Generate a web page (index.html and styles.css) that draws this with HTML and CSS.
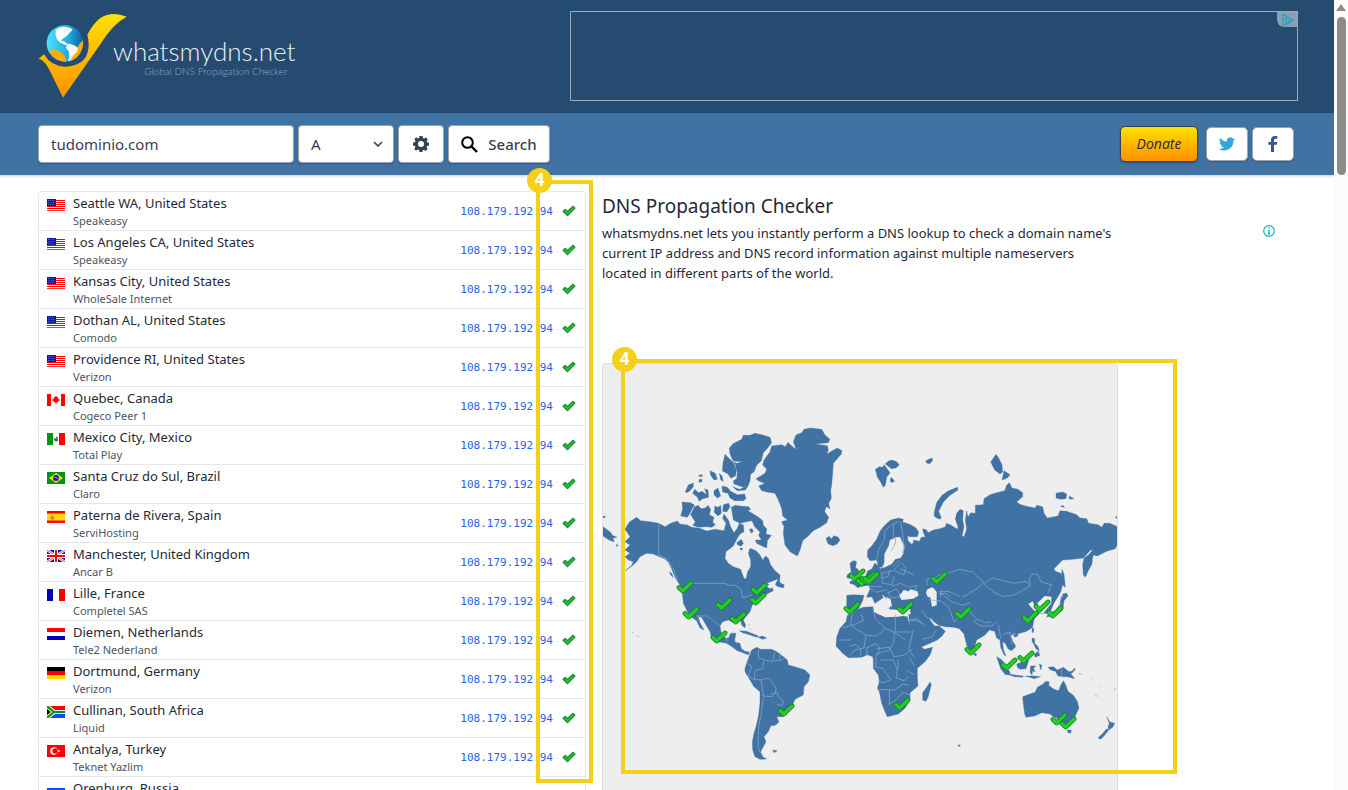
FILE: index.html
```html
<!DOCTYPE html>
<html lang="en">
<head>
<meta charset="utf-8">
<title>DNS Propagation Checker - whatsmydns.net</title>
<link rel="stylesheet" href="styles.css">
</head>
<body>
<svg class="sprite" aria-hidden="true">
  <symbol id="us" viewBox="0 0 18 12"><path fill="#fff" d="M0 0h18v12H0z"/><path stroke="#f00" d="M0 1.5h18M0 3.5h18M0 5.5h18M0 7.5h18M0 9.5h18"/><path stroke="#f33" d="M0 11.5h18"/><path fill="#0a17a7" d="M0 0h9v7H0z"/><path stroke="#8e95dd" stroke-width=".7" stroke-dasharray="1 1.3" d="M1 1.5h7M1.5 3.5h7M1 5.5h7"/></symbol>
  <symbol id="ca" viewBox="0 0 18 12"><path fill="#fff" d="M0 0h18v12H0z"/><path fill="#f00" d="M0 0h4v12H0zM14 0h4v12h-4zM9 1.5l1 1.8 1-.5-.2 2.2 1.7-.8-.3 1.4.8.5-2.5 1.9.2.8-1.4-.2V11h-.6V8.6l-1.4.2.2-.8L5 6.100l.8-.5-.3-1.400 1.700.8L7 2.800l1 .5z"/></symbol>
  <symbol id="mx" viewBox="0 0 18 12"><path fill="#fff" d="M0 0h18v12H0z"/><path fill="#009418" d="M0 0h6v12H0z"/><path fill="#f00" d="M12 0h6v12h-6z"/><path fill="#665c44" d="M7 6l1-1 1 .5.5-2 1.500 1-.5 1.500 1 1.500-1.500.5L9 9 8 7.500H7z"/></symbol>
  <symbol id="br" viewBox="0 0 18 12"><path fill="#009418" d="M0 0h18v12H0z"/><path fill="#ffdf00" d="M9 1l7 5-7 5-7-5z"/><circle cx="9" cy="6" r="3" fill="#11209c"/><path stroke="#9bd" fill="none" stroke-width=".8" d="M6.300 5.300q3-.6 5.300 1.700"/></symbol>
  <symbol id="es" viewBox="0 0 18 12"><path fill="#f00" d="M0 0h18v12H0z"/><path fill="#ffd900" d="M0 2.500h18v7H0z"/><path fill="#c88455" d="M3.500 8.500V6L5 4l1.500 1.500 1 3z"/></symbol>
  <symbol id="gb" viewBox="0 0 18 12"><path fill="#0b199b" d="M0 0h18v12H0z"/><path stroke="#fff" stroke-width="2.600" d="M0 0l18 12M18 0L0 12"/><path stroke="#f33" stroke-width=".9" d="M0 0l18 12M18 0L0 12"/><path stroke="#fff" stroke-width="4" d="M9 0v12M0 6h18"/><path stroke="#f00" stroke-width="2" d="M9 0v12M0 6h18"/></symbol>
  <symbol id="fr" viewBox="0 0 18 12"><path fill="#fff" d="M0 0h18v12H0z"/><path fill="#0000b8" d="M0 0h6v12H0z"/><path fill="#f00" d="M12 0h6v12h-6z"/></symbol>
  <symbol id="nl" viewBox="0 0 18 12"><path fill="#fff" d="M0 0h18v12H0z"/><path fill="#f00" d="M0 0h18v4H0z"/><path fill="#0000b8" d="M0 8h18v4H0z"/></symbol>
  <symbol id="de" viewBox="0 0 18 12"><path d="M0 0h18v4H0z"/><path fill="#f00" d="M0 4h18v4H0z"/><path fill="#ffd800" d="M0 8h18v4H0z"/></symbol>
  <symbol id="za" viewBox="0 0 18 12"><path fill="#fff" d="M0 0h18v12H0z"/><path fill="#f00" d="M3 0h15v4H8z"/><path fill="#0b48ff" d="M3 12h15V8H8z"/><path d="M0 2.500L4 6 0 9.500z"/><path fill="none" stroke="#009418" stroke-width="2.200" d="M0 0l7 6-7 6M7 6h11"/><path fill="none" stroke="#fc0" stroke-width=".8" d="M0 2.500L4 6l-4 3.500"/></symbol>
  <symbol id="tr" viewBox="0 0 18 12"><path fill="#f00" d="M0 0h18v12H0z"/><circle cx="7" cy="6" r="3.800" fill="#fff"/><circle cx="8.200" cy="6" r="2.800" fill="#f00"/><path fill="#fff" d="M10 6l1.200-.4.100-1.200.8 1 1.100-.4-.6 1 .6 1-1.100-.4-.8 1-.1-1.200z"/></symbol>
  <symbol id="ru" viewBox="0 0 18 12"><path fill="#fff" d="M0 0h18v12H0z"/><path fill="#0b48ff" d="M0 4h18v4H0z"/><path fill="#f00" d="M0 8h18v4H0z"/></symbol>
  <symbol id="ok" viewBox="0 0 14 12"><path fill="#1fc41f" stroke="#2a8a4a" stroke-width="1.200" stroke-linejoin="round" d="M1 6.300L3 4.300 5.500 6.500 11 1.300l2 1.900L5.600 10.700z"/></symbol>
  <symbol id="pin" viewBox="0 0 18 14"><path fill="none" stroke="#147d22" stroke-width="4.800" stroke-linecap="round" stroke-linejoin="round" d="M3 7.500L6.700 11 15 3"/><path fill="none" stroke="#22cf28" stroke-width="3.200" stroke-linecap="round" d="M3 7.500L6.700 11 15 3"/></symbol>
</svg>
<div class="window">
<div class="page">
  <header class="masthead">
    <a class="brand" href="#">
      <svg class="mark" viewBox="52 39 270 258" aria-hidden="true">
        <defs>
          <linearGradient id="gold" x1="0" y1="0" x2="0" y2="1"><stop offset="0" stop-color="#ffe100"/><stop offset="1" stop-color="#ff9200"/></linearGradient>
          <linearGradient id="sea" x1="0" y1="0" x2="1" y2="0"><stop offset="0" stop-color="#48e4fa"/><stop offset=".6" stop-color="#25a8df"/><stop offset="1" stop-color="#0b5fa5"/></linearGradient>
        </defs>
        <circle cx="133" cy="130" r="55" fill="url(#sea)"/>
        <path fill="#ffac0a" d="M84 152Q112 146 126 162Q136 172 136 186Q104 185 84 152zM187 121Q190 165 150 184Q152 168 166 152Q172 134 187 121z"/>
        <path fill="#fff" d="M105 90L118 82 132 80 150 84 156 90 148 97 141 106 133 112 124 118 121 124 131 124 137 130 148 132 134 135 120 128 110 120 105 106zM138 136L148 132 160 136 172 144 170 154 160 164 153 174 147 184 143 183 146 166 144 154 136 144z"/>
        <path fill="url(#gold)" d="M54 176L70 163q22 37 63 37 62-2 70-52 3-24-3-44 17-33 39-50 35-22 79-4-42 22-77 80L127 293q-27-56-44-89-13-24-29-28z"/>
      </svg>
      <span class="wordmark"><span class="site">whatsmydns.net</span><span class="tagline">Global DNS Propagation Checker</span></span>
    </a>
    <div class="banner"><svg class="choice" viewBox="0 0 20 15" aria-hidden="true"><path fill="#8f9db2" d="M0 0h20v15H7q-6 0-7-7z"/><path fill="none" stroke="#26a6c4" stroke-width="1.300" stroke-linejoin="round" d="M6 2v12l3-1V6l5 2-5 4M6 2l11 6-8 5"/></svg></div>
  </header>

  <form class="toolbar">
    <input class="control domain" type="text" value="tudominio.com" aria-label="Domain name">
    <span class="picker"><select class="control type" aria-label="Record type"><option>A</option></select><svg class="chevron" viewBox="0 0 10 6" aria-hidden="true"><path fill="none" stroke="#374151" stroke-width="1.600" d="M1 1l4 4 4-4"/></svg></span>
    <button class="control gear" type="button" aria-label="Settings"><svg viewBox="0 0 16 16" aria-hidden="true"><path fill="#374151" fill-rule="evenodd" d="M6.500 0h3l.5 2.100 1.100.5L13 1.400 14.900 3.400 13.600 5.200l.5 1.100 1.900.4v2.800l-2 .5-.5 1.100 1.200 1.800-2 2-1.800-1.200-1.100.5-.4 1.900H6.500L6 14l-1.100-.5L3 14.700 1.200 12.900 2.400 11l-.5-1.100L0 9.500V6.600l2-.4.500-1.100L1.300 3.300 3.200 1.300 5 2.500 6.100 2zM8 5a3 3 0 100 6 3 3 0 000-6z"/></svg></button>
    <button class="control search" type="button"><svg viewBox="0 0 17 17" aria-hidden="true"><circle cx="6.500" cy="6.500" r="5.300" fill="none" stroke="#000" stroke-width="2"/><path stroke="#000" stroke-width="2.400" d="M10.500 10.500l5.500 5.500"/></svg>Search</button>
    <div class="links">
      <button class="donate" type="button">Donate</button>
      <a class="social" href="#" aria-label="Twitter"><svg viewBox="0 0 24 20" aria-hidden="true"><path fill="#33a6dc" d="M24 2.400a10 10 0 01-2.800.8A5 5 0 0023.300.5a10 10 0 01-3.100 1.200 4.900 4.900 0 00-8.400 4.500A14 14 0 011.700 1a4.900 4.900 0 001.500 6.600A5 5 0 011 7v.1a4.900 4.900 0 004 4.800 5 5 0 01-2.200.1 4.900 4.900 0 004.600 3.400A9.900 9.900 0 010 17.500a14 14 0 0021.500-12.400A10 10 0 0024 2.400z"/></svg></a>
      <a class="social" href="#" aria-label="Facebook"><svg viewBox="0 0 24 24" aria-hidden="true"><path fill="#39569c" d="M9 24V13H5V9h4V6q0-6 6-6h3.500v4H16q-2.500 0-2.500 2.500V9h5l-.7 4h-4.300v11z"/></svg></a>
    </div>
  </form>

  <main class="content">
    <table class="servers">
      <tbody>
      <tr><td class="flag"><svg><use href="#us"/></svg></td><td class="place">Seattle WA, United States<small>Speakeasy</small></td><td class="ip"><a href="#">108.179.192.94</a></td><td class="state"><svg><use href="#ok"/></svg></td></tr>
      <tr><td class="flag"><svg><use href="#us"/></svg></td><td class="place">Los Angeles CA, United States<small>Speakeasy</small></td><td class="ip"><a href="#">108.179.192.94</a></td><td class="state"><svg><use href="#ok"/></svg></td></tr>
      <tr><td class="flag"><svg><use href="#us"/></svg></td><td class="place">Kansas City, United States<small>WholeSale Internet</small></td><td class="ip"><a href="#">108.179.192.94</a></td><td class="state"><svg><use href="#ok"/></svg></td></tr>
      <tr><td class="flag"><svg><use href="#us"/></svg></td><td class="place">Dothan AL, United States<small>Comodo</small></td><td class="ip"><a href="#">108.179.192.94</a></td><td class="state"><svg><use href="#ok"/></svg></td></tr>
      <tr><td class="flag"><svg><use href="#us"/></svg></td><td class="place">Providence RI, United States<small>Verizon</small></td><td class="ip"><a href="#">108.179.192.94</a></td><td class="state"><svg><use href="#ok"/></svg></td></tr>
      <tr><td class="flag"><svg><use href="#ca"/></svg></td><td class="place">Quebec, Canada<small>Cogeco Peer 1</small></td><td class="ip"><a href="#">108.179.192.94</a></td><td class="state"><svg><use href="#ok"/></svg></td></tr>
      <tr><td class="flag"><svg><use href="#mx"/></svg></td><td class="place">Mexico City, Mexico<small>Total Play</small></td><td class="ip"><a href="#">108.179.192.94</a></td><td class="state"><svg><use href="#ok"/></svg></td></tr>
      <tr><td class="flag"><svg><use href="#br"/></svg></td><td class="place">Santa Cruz do Sul, Brazil<small>Claro</small></td><td class="ip"><a href="#">108.179.192.94</a></td><td class="state"><svg><use href="#ok"/></svg></td></tr>
      <tr><td class="flag"><svg><use href="#es"/></svg></td><td class="place">Paterna de Rivera, Spain<small>ServiHosting</small></td><td class="ip"><a href="#">108.179.192.94</a></td><td class="state"><svg><use href="#ok"/></svg></td></tr>
      <tr><td class="flag"><svg><use href="#gb"/></svg></td><td class="place">Manchester, United Kingdom<small>Ancar B</small></td><td class="ip"><a href="#">108.179.192.94</a></td><td class="state"><svg><use href="#ok"/></svg></td></tr>
      <tr><td class="flag"><svg><use href="#fr"/></svg></td><td class="place">Lille, France<small>Completel SAS</small></td><td class="ip"><a href="#">108.179.192.94</a></td><td class="state"><svg><use href="#ok"/></svg></td></tr>
      <tr><td class="flag"><svg><use href="#nl"/></svg></td><td class="place">Diemen, Netherlands<small>Tele2 Nederland</small></td><td class="ip"><a href="#">108.179.192.94</a></td><td class="state"><svg><use href="#ok"/></svg></td></tr>
      <tr><td class="flag"><svg><use href="#de"/></svg></td><td class="place">Dortmund, Germany<small>Verizon</small></td><td class="ip"><a href="#">108.179.192.94</a></td><td class="state"><svg><use href="#ok"/></svg></td></tr>
      <tr><td class="flag"><svg><use href="#za"/></svg></td><td class="place">Cullinan, South Africa<small>Liquid</small></td><td class="ip"><a href="#">108.179.192.94</a></td><td class="state"><svg><use href="#ok"/></svg></td></tr>
      <tr><td class="flag"><svg><use href="#tr"/></svg></td><td class="place">Antalya, Turkey<small>Teknet Yazlim</small></td><td class="ip"><a href="#">108.179.192.94</a></td><td class="state"><svg><use href="#ok"/></svg></td></tr>
      <tr><td class="flag"><svg><use href="#ru"/></svg></td><td class="place">Orenburg, Russia</td><td class="ip"></td><td class="state"></td></tr>
      </tbody>
    </table>

    <section class="about">
      <h1>DNS Propagation Checker</h1>
      <p>whatsmydns.net lets you instantly perform a DNS lookup to check a domain name's current IP address and DNS record information against multiple nameservers located in different parts of the world.</p>
      <div class="map">
        <svg class="world" viewBox="603 364 514 450" role="img" aria-label="World map of DNS servers">
          <!-- North America, Arctic islands, Greenland -->
          <g class="land" transform="translate(600 410) scale(.33333)">
            <path d="M75 358L88 336 110 322 122 332 150 335 176 340 195 350 212 340 232 333 240 342 262 345 275 352 300 355 320 363 345 358 372 362 378 340 368 325 372 312 385 330 392 350 402 368 412 355 418 340 430 345 432 365 420 372 412 385 400 408 378 425 375 445 385 460 400 470 422 478 428 495 432 505 438 507 443 485 452 470 452 450 445 430 450 415 468 422 480 435 488 450 497 438 505 445 512 465 525 482 540 495 540 505 520 512 500 520 495 545H250L238 522 225 502 215 477 205 457 195 447 178 440 160 432 140 430 120 440 110 455 100 465 76 482 95 466 100 455 85 450 75 440 90 430 75 420 90 405 75 395 90 380z"/>
            <path d="M9 350l22 16 6 10 14 6-12 2 4 12-16-6-18-12zM9 318l9 3-9 3zM48 403l8 4-6 2zM208 485l8 6 3 12-8-10zM235 510l20 16 4 12-18-14zM525 525L538 500 540 518 553 525 550 534 536 530zM505 528l14 2-8 6z"/>
            <path d="M468 206L495 190 500 178 488 165 492 150 510 125 515 108 545 104 556 110 564 97 575 108 588 118 580 95 588 75 605 68 612 58 630 54 665 58 675 75 690 88 685 98 645 102 682 107 685 120 680 132 712 114 726 122 724 132 700 160 698 190 695 225 692 240 694 265 686 280 690 296 678 290 674 305 686 322 680 338 660 352 640 362 625 378 608 392 600 420 592 438 570 425 555 405 550 370 552 350 545 335 562 330 548 318 545 295 535 270 525 250 500 246 485 242 476 228 495 220 478 214z"/>
            <path d="M388 115L398 102 425 88 430 76 450 76 465 70 485 74 510 82 515 98 500 118 490 128 484 152 470 166 462 186 452 192 450 212 444 228 430 232 402 222 400 212 410 206 412 188 406 164 398 150 390 132zM375 133l14 14 10 8 10 24-2 18-14 8-10-14-16-8 2-24zM330 182l16 8 6 18-10 2-10-14zM358 190l8 8 4 16-8-4zM296 196l10-2 2 4-10 2zM297 209l8-2 1 8-9 2zM256 245L265 225 280 219 280 230 270 242 260 248zM278 250L284 238 296 248 306 244 320 254 314 236 324 240 326 262 308 266 298 274 292 262zM342 242l12-8 8 24-10 6-10-10zM366 228L382 232 392 244 412 254 434 252 438 266 430 272 404 272 390 264 384 250 368 246zM398 230L418 238 444 228 436 240 412 242zM246 276L272 278 284 286 276 296 270 310 262 322 242 318 248 296zM272 314L282 292 294 286 304 296 316 294 324 286 332 298 328 314 342 322 338 336 346 344 336 352 318 350 294 352 278 346 286 336zM344 288l10 4 8-6 2 24-10 8-12-12 2-8zM370 284l16-4 4 10-10 16-12-2zM394 292L406 286 420 288 446 290 452 298 444 302 460 312 476 322 488 332 490 346 500 356 498 372 514 376 502 392 500 414 486 408 470 400 466 390 484 390 476 376 480 366 464 350 456 332 436 336 420 340 400 330z"/>
            <path d="M410 398l14-10 6 12-6 8-10-2zM448 358l8-2 4 8-6 6zM420 414l6 0 2 5-6 1zM678 385l10-6 6 8 8-10 12 4 6 10-10 12-12 4-14-6zM742 494l12-8 2 12-8 8-8-4zM756 456l8-4 6 4-4 16 10 8v20l10 14-10 20-10-6 4-20-8-20z"/>
            <path d="M392 150q16 8 36 4l-18 6z" class="water"/>
          </g>
          <!-- USA, Central and South America -->
          <g class="land" transform="translate(600 560) scale(.33333)">
            <path d="M245 80L250 70H500L515 78 520 92 495 105 470 120 460 130 455 140 450 155 436 172 430 180 437 195 434 204 425 195 422 182 400 188 385 180 368 185 360 198 363 215 370 232 385 235 392 220 408 220 405 235 404 246 420 250 424 266 435 274 448 276 446 285 425 277 412 272 398 262 380 250 355 245 335 234 330 215 318 195 305 172 294 170 300 188 312 210 300 204 290 182 275 172 262 155 250 130z"/>
            <path d="M448 288L455 270 470 262 482 268 515 268 530 275 550 290 562 300 565 315 590 322 615 330 630 345 625 365 612 380 610 405 585 418 578 435 565 455 550 470 530 470 537 485 528 495 512 498 505 515 492 530 498 545 490 560 482 575 488 590 500 597 480 598 465 590 458 570 457 545 462 520 468 500 475 470 480 430 480 395 462 380 450 360 435 335 435 325 440 310zM418 212L440 214 460 222 476 228 470 232 448 224 428 218zM474 232l14-4 12 6-12 4zM518 570l14 2-10 6zM445 192l4 6M448 205l4 6M96 216l6 4M110 226l8 4"/>
            <path class="water" d="M500 78l20-10 8 8-18 10z"/>
            <path class="border" d="M262 70H374L390 76H408L424 90 428 114 440 110 456 104M288 168H318L334 176 348 190 360 198M380 232v14M404 236l6 16M476 266L474 294 492 298 488 326 464 332V360L444 348 456 320 438 308M466 358L482 360 508 354 528 384 526 400 516 410 490 408 484 360M490 410L484 460 476 500 474 550 478 574 490 588M512 404L530 396 536 412 550 424 546 436 530 434M494 300L518 304 524 276M520 304L540 300V278M540 304L556 292"/>
            <path class="border" d="M176-110V-14L200-4 220 28 232 58"/>
          </g>
          <!-- Europe, Russia, northern Asia -->
          <g class="land" transform="translate(850 430) scale(.33333)">
            <path d="M76 118l12-8 10 2 4-8 8 10 10 14-10 14-4 24-6 6-8-16-10-14zM106 102l8-8 10-4 14 4 10 10-10 10-14 2zM120 150l4-8 10 12-10 4zM226 94l10-6 10-4 2 8-10 10-6-2zM422 96L438 73 446 84 456 104 458 126 450 132 434 120zM456 150L462 122 480 134 472 144zM252 250L260 218 276 196 296 182 322 172 324 180 300 196 280 216 266 244 274 264 268 268 254 260zM618 190l20-4 12 6-2 14-16 2-14-4zM658 198l14 8-14 2zM632 230l6-4 6 6zM796 262l6-4v8z"/>
            <path d="M53 360L65 348 80 328 90 304 104 286 122 270 146 264 160 268 158 276 182 284 198 294 206 306 202 320 180 320 172 318 174 332 184 342 190 340 190 330 208 334 214 322 226 320 220 308 218 296 230 300 234 308 250 300 270 296 286 290 290 280 304 286 322 298 324 290 316 268 320 250 330 238 340 242 338 270 342 290 336 318 342 320 350 298 346 270 350 242 354 262 362 248 376 250 376 226 400 224 402 206 420 194 440 188 464 182 470 166 478 158 486 174 504 178 518 188 518 200 500 216 512 224 536 230 556 234 560 226 578 230 582 250 592 264 624 258 630 242 650 244 680 254 690 264 710 266 716 280 744 284 756 292 762 280 780 280 802 290V344L796 356 770 364 742 378 728 374 734 360 722 360 700 384 670 388 638 390 612 416 616 424 632 430 640 452 634 480 622 520 602 550H50V500L60 478 56 466 28 470 0 460V454L30 446 46 440 52 424 66 416 74 400 82 404 90 416 106 412 126 402 136 388 152 384 160 372 164 350 150 320 134 322 138 336 124 362 108 382 104 396 96 412 86 412 80 390 60 392 52 380z"/>
            <path d="M698 404L702 384 716 374 730 358 734 362 728 382 726 402 714 424 706 442 700 434zM636 418l6 14 4 40-8-6-4-30zM636 492l14-2 4 8-12 14-4 28-18 12-22 8 4-10 22-12 10-20zM0 400L10 392 18 402 14 412 26 424 28 442 6 446z"/>
            <path class="water" d="M103 408L103 372 116 348 120 330 134 324 137 336 124 362 132 378 154 382 132 388 122 402zM150 500L160 480 172 486 182 478 202 484 206 496 190 506 160 510zM232 478l14-6 10 10-8 8 12 18-2 22-16-2-6-20-8-20zM30 520l16-18 20 0 8 18 10 20H28zM86 500L100 496 112 510 122 528 116 536 104 518zM535 522l20-8-6 14-12 2zM638 478L636 520 622 550 600 550 612 520z"/>
            <path class="border" d="M80 390L86 358 104 328V304L122 286 146 274M130 282V324M152 275L158 315 162 345 158 370M92 430L130 422 150 400M132 422L162 434 168 414 154 396M132 440L126 464 98 460 94 430M96 470H56M126 468l26-8 24 12 24-6-6 20M110 490L140 476 152 500 122 504 114 484M60 475l20 12 30-8M232 466L230 448 260 440 280 430 298 428 328 418 368 426 404 460 428 444 452 450 492 460 528 454 540 468 496 494 460 500 430 486 400 460 372 482 352 494 332 504 320 494 294 484H270L276 520M542 464L536 450 548 432 562 432 574 456 604 464 594 490M200 510l30 8 16 22M270 490H290L310 514 330 526"/>
          </g>
          <!-- Africa, southern Asia, Oceania -->
          <g class="land" transform="translate(830 560) scale(.33333)">
            <path d="M50 106L70 104 102 106 98 122 88 142 78 154 56 156 50 136z"/>
            <path d="M52 166L66 160 84 148 100 142 130 140 134 158 160 168 172 172 186 160 200 165 232 170 236 185 250 210 268 240 276 262 282 268 308 262 300 285 285 305 262 325 262 350 264 378 240 398 240 420 225 445 205 462 172 470 168 462 155 430 148 395 142 385 148 365 145 345 130 325 130 300 128 290 112 284 95 292 55 293 38 280 18 258 20 232 30 205 48 185zM278 398L290 382 300 366 304 374 294 412 288 424 278 420z"/>
            <path d="M184 132L200 118 256 112H670L646 140 612 178 608 202 590 214 562 222 554 220 542 228 548 244 556 256 556 262 544 272 534 266 526 250 518 246 520 268 528 288 522 284 512 262 510 240 500 234 494 214 478 210 464 226 440 240 434 260 424 280 410 256 402 222 388 206 372 202 346 200 326 196 308 182 302 172 300 180 314 198 328 198 346 214 336 228 322 240 276 260 262 242 248 214 238 186 236 164 210 160z"/>
            <path d="M148 100l14 14 8 22-10-6-14-20zM432 278l8 4-2 6-6-4zM500 290L516 300 528 320 540 336 540 344 526 344 512 326zM536 342L560 346 580 348 578 352 554 350 536 344zM560 312L576 306 588 286 598 292 594 308 588 326 570 328 562 322zM602 318h16l-8 6 6 12-8-4-2 14-6-10zM606 206l6-2-2 14-4-2zM606 234L614 236V250L624 260 628 274 618 266 612 254 606 244zM612 284l12-10 6 12-14 6zM550 224l12-4 2 8-10 4zM628 312l8 4-4 14zM654 322L670 320 682 330 700 322 718 336 734 356 712 350 700 350 684 348 676 334 662 330zM716 336L728 332 734 324 736 328 726 340 718 340zM744 340l12 4M780 352l6 6M584 348h28l20 2-20 6M792 402l12 8M804 378l4 4M850 390l10-6M694 108L696 118 706 100 710 106 702 118 692 138 686 158 660 168 650 172 656 160 676 152 690 134zM384 554l8 2-6 4z"/>
            <path d="M578 410L600 402 616 396 622 382 636 374 648 364 658 366 656 376 672 388 686 392 692 376 700 362 706 372 714 394 730 406 742 424 747 444 736 468 730 486 710 496 694 484 680 474 672 472 660 462 636 458 614 468 588 472 584 462 580 432zM712 510h12l-2 10-8-2zM830 470L840 486 854 490 848 502 836 510 834 500 838 490zM830 506L836 510 824 526 812 538 804 534 820 518z"/>
            <path class="water" d="M208 106L224 90 248 100 262 108 250 116 214 120zM294 92l16-8 10 12 0 40-14 4-4-24zM130 134L162 112 178 148 208 150 240 146 242 162 206 170 166 172 132 156zM168 110l14 8 4 22-10-4zM595 132L608 124 614 138 622 150 630 148 622 130 644 108 664 110 664 130 640 160 616 156z"/>
            <path class="border" d="M66 160L62 196 36 204M62 196L108 226 140 228 166 206 192 216V246L178 270 140 282M64 240H28M94 162L100 182 66 196M128 142L136 176 166 206M196 164V216H244M108 226L102 264 74 270 58 288M60 258L78 254 92 268V290M112 290L110 264 138 250 150 266 138 290V320M140 266L178 262 192 290 222 286 248 266M152 300H190L202 330 198 354 222 362 236 350M134 320L160 326 182 360 162 368 142 364M146 388L194 390 220 372 236 376M178 390V434M176 434L198 420 220 396 240 406M204 330V298M230 330L252 344M238 292L254 318M250 210L236 266 252 292M192 216L226 240M236 180L262 176 282 196M274 150L290 172 310 182M296 120L330 122 356 140 372 186 398 160 420 140 424 162 442 178 466 188 484 186M330 96L366 126 398 136 420 128M434 178V188L456 198 484 198 502 184M506 196L512 236M516 226L536 216 546 236V256M538 216L550 226M238 182H260L280 192M276 238L308 230 318 210M695 326v22M208 0L190 20M180 30L174 50 152 54M210 26L250 44"/>
          </g>
          <g>
            <use href="#pin" x="676" y="580" width="18" height="14"/><use href="#pin" x="682" y="606" width="18" height="14"/><use href="#pin" x="715" y="597" width="18" height="14"/><use href="#pin" x="729" y="611" width="18" height="14"/><use href="#pin" x="749" y="592" width="18" height="14"/><use href="#pin" x="750" y="582" width="18" height="14"/><use href="#pin" x="710" y="630" width="18" height="14"/><use href="#pin" x="777" y="703" width="18" height="14"/>
            <use href="#pin" x="848" y="568" width="18" height="14"/><use href="#pin" x="855" y="573" width="18" height="14"/><use href="#pin" x="859" y="571" width="18" height="14"/><use href="#pin" x="862" y="571" width="18" height="14"/><use href="#pin" x="843" y="601" width="18" height="14"/><use href="#pin" x="896" y="601" width="18" height="14"/><use href="#pin" x="930" y="571" width="18" height="14"/><use href="#pin" x="954" y="606" width="18" height="14"/><use href="#pin" x="964" y="642" width="18" height="14"/><use href="#pin" x="893" y="697" width="18" height="14"/>
            <use href="#pin" x="1021" y="610" width="18" height="14"/><use href="#pin" x="1033" y="599" width="18" height="14"/><use href="#pin" x="1046" y="605" width="18" height="14"/><use href="#pin" x="1000" y="657" width="18" height="14"/><use href="#pin" x="1017" y="650" width="18" height="14"/><use href="#pin" x="1050" y="712" width="18" height="14"/><use href="#pin" x="1059" y="716" width="18" height="14"/>
          </g>
        </svg>
      </div>
    </section>
    <aside class="side"><a href="#" aria-label="About this ad"><svg viewBox="0 0 12 12" aria-hidden="true"><circle cx="6" cy="6" r="5.300" fill="none" stroke="#20b0c8" stroke-width="1.200"/><path stroke="#20b0c8" stroke-width="1.400" d="M6 2.500v1.300M6 5v4M5 9h2"/></svg></a></aside>
  </main>
</div>
<div class="scrollbar" aria-hidden="true"><span class="arrow"></span><span class="thumb"></span></div>
<div class="callout list-callout"><span>4</span></div>
<div class="callout map-callout"><span>4</span></div>
</div>
</body>
</html>
```
FILE: styles.css
```css
* { box-sizing: border-box; }
body { margin: 0; font: 13px/20px "Noto Sans", "Open Sans", sans-serif; color: #1f2937; background: #fff; }
.sprite { position: absolute; width: 0; height: 0; }
.window { position: relative; display: flex; height: 100vh; overflow: hidden; }
.page { flex: 1; min-width: 0; }

.masthead { display: flex; justify-content: space-between; align-items: flex-start; padding: 11px 36px 12px 38px; background: #264b70; }
.brand { display: flex; align-items: flex-start; color: #fff; text-decoration: none; }
.mark { width: 90px; height: 86px; margin-top: 2px; }
.wordmark { display: flex; flex-direction: column; align-items: flex-end; margin: 26px 0 0 -15px; font-family: Lato, sans-serif; font-weight: 300; }
.site { font-size: 26px; line-height: 28px; color: #e9eef4; }
.tagline { padding-right: 8px; font-size: 10px; line-height: 12px; color: #91a7be; }
.banner { display: flex; justify-content: flex-end; align-items: flex-start; flex: 0 1 728px; height: 90px; border: 1px solid #9aaabc; }
.choice { width: 20px; height: 15px; }

.toolbar { display: flex; align-items: center; gap: 4px; padding: 12px 40px 12px 38px; background: #4072a4; box-shadow: 0 1px 3px rgba(0, 0, 0, .2); }
.control { height: 38px; border: 1px solid #9ca3af; border-radius: 4px; background: #fff; color: #374151; font: 15px/20px "Noto Sans", "Open Sans", sans-serif; box-shadow: 0 1px 2px rgba(0, 0, 0, .2); }
.domain { width: 256px; padding: 0 12px; }
.picker { position: relative; }
.type { display: block; width: 96px; padding: 0 12px; appearance: none; }
.chevron { position: absolute; right: 11px; top: 16px; width: 10px; height: 6px; pointer-events: none; }
.gear { display: flex; align-items: center; justify-content: center; width: 46px; padding: 0; }
.gear svg { width: 16px; height: 16px; }
.search { display: flex; align-items: center; justify-content: center; gap: 10px; width: 102px; padding: 0; font-weight: 500; }
.search svg { width: 17px; height: 17px; }
.links { display: flex; align-items: center; gap: 4px; margin-left: auto; }
.donate { width: 78px; height: 36px; margin-right: 4px; padding: 0; border: 1px solid #374151; border-radius: 5px; background: linear-gradient(#ffe000, #ff9000); color: #1f2937; font: italic 14px/20px "Open Sans", "Noto Sans", sans-serif; box-shadow: 0 1px 2px rgba(0, 0, 0, .3); }
.social { display: flex; align-items: center; justify-content: center; width: 42px; height: 34px; border: 1px solid #9ca3af; border-radius: 5px; background: #fff; box-shadow: 0 1px 2px rgba(0, 0, 0, .2); }
.social svg { width: 16px; height: 16px; }

.content { display: grid; grid-template-columns: 548fr 516fr 164fr; align-items: start; gap: 16px; padding: 16px 36px 0 38px; }
.servers { width: 100%; border: 1px solid #e5e7eb; border-radius: 4px; border-spacing: 0; }
.servers td { padding: 1px 0; border-bottom: 1px solid #e5e7eb; vertical-align: middle; }
.servers .flag { width: 34px; padding: 7px 0 0 8px; vertical-align: top; }
.flag svg { display: block; width: 18px; height: 12px; }
.place small { display: block; font-size: 11px; line-height: 16px; color: #4b5563; }
.servers .ip { width: 100px; padding-top: 3px; text-align: right; font-family: "DejaVu Sans Mono", monospace; font-size: 11px; }
.ip a { color: #2563eb; text-decoration: none; }
.state { width: 32px; }
.state svg { display: block; width: 14px; height: 12px; margin-left: 9px; }

h1 { margin: 0; font-size: 19px; line-height: 30px; font-weight: 400; }
.about p { min-height: 92px; margin: 2px 0 48px; }
.map { overflow: hidden; border: 1px solid #dcdddf; border-radius: 4px; background: #eee; }
.world { display: block; width: 100%; }
.land { fill: #4072a4; stroke: #4072a4; stroke-width: 1; stroke-linejoin: round; }
.water { fill: #eee; stroke: none; }
.border { fill: none; stroke: #91afcb; stroke-width: 2; }
.side { display: flex; justify-content: flex-end; padding: 34px 23px 0 0; }
.side svg { display: block; width: 12px; height: 12px; }

.scrollbar { display: flex; flex-direction: column; align-items: center; width: 14px; padding-top: 4px; background: #fcfcfc; }
.arrow { width: 0; border: 5px solid transparent; border-top: 0; border-bottom: 7px solid #8b8b8b; }
.thumb { width: 9px; height: 158px; margin-top: 6px; border-radius: 5px; background: #8b8b8b; }

.callout { position: absolute; border: 4px solid #f4d01a; }
.callout span { position: absolute; left: -13px; top: -16px; width: 25px; height: 25px; border-radius: 50%; background: #f4d01a; color: #fff; font: 700 17px/24px "Noto Sans", sans-serif; text-align: center; }
.list-callout { left: 536px; top: 180px; width: 57px; height: 603px; }
.map-callout { left: 621px; top: 359px; width: 556px; height: 415px; }
```
